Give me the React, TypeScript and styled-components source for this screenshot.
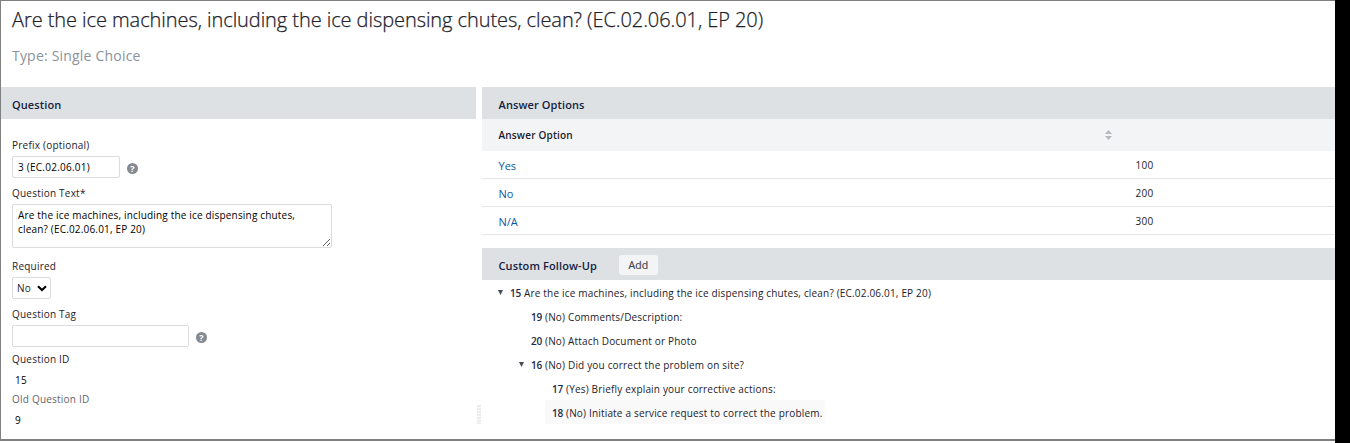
import React from "react";
import styled, { createGlobalStyle } from "styled-components";

const GlobalStyle = createGlobalStyle`
  *, *::before, *::after { box-sizing: border-box; }
  body {
    margin: 0;
    background: #fff;
    color: #1d2129;
    font-family: "Open Sans", "Liberation Sans", sans-serif;
    font-size: 10px;
  }
  input, textarea, select, button { font: inherit; letter-spacing: inherit; color: inherit; margin: 0; }
`;

const Screen = styled.div`
  display: flex;
  height: 443px;
  overflow: hidden;
`;

const Page = styled.main`
  width: 1335px;
  height: 441px;
  border: solid #7f7f7f;
  border-width: 1px 0 2px 1px;
  letter-spacing: 0.18px;
`;

const Backdrop = styled.div`
  flex: 1;
  background: #000;
`;

const Header = styled.header`
  height: 86px;
  padding: 5px 11px 0;
`;

const Title = styled.h1`
  margin: 0;
  color: #1d2129;
  font-size: 20px;
  font-weight: 300;
  -webkit-text-stroke: 0.25px #1d2129;
  line-height: 27px;
  letter-spacing: -0.07px;
  white-space: nowrap;
`;

const Subtitle = styled.p`
  margin: 13px 0 0;
  font-size: 14px;
  line-height: 20px;
  letter-spacing: 0.2px;
  color: #8c929b;
`;

const Columns = styled.div`
  display: flex;
  height: 352px;
`;

const QuestionPanel = styled.section`
  width: 475px;
`;

const Splitter = styled.div`
  width: 6px;
  display: flex;
  align-items: flex-end;
  justify-content: center;
  padding-bottom: 15px;
`;

const Grip = styled.div`
  width: 4px;
  height: 19px;
  background: repeating-linear-gradient(#ececec 0 2px, #f8f8f8 2px 3px);
`;

const AnswerPanel = styled.section`
  flex: 1;
`;

const PanelHeader = styled.div<{ $inset: number }>`
  display: flex;
  align-items: center;
  height: 32px;
  padding: 3px ${(p) => p.$inset}px 0;
  background: #dde1e4;
  color: #16213f;
  font-size: 11px;
  font-weight: 600;
  letter-spacing: 0.11px;
`;

const Form = styled.div`
  padding: 20px 11px 0;
`;

const Label = styled.label<{ $top?: number; $muted?: boolean }>`
  display: block;
  height: 14px;
  margin-top: ${(p) => p.$top ?? 0}px;
  line-height: 13px;
  font-size: 10px;
  letter-spacing: 0.22px;
  color: ${(p) => (p.$muted ? "#61656d" : "#1d2129")};
`;

const FieldRow = styled.div`
  display: flex;
  align-items: center;
  gap: 7px;
  margin-top: 3px;
`;

const TextInput = styled.input<{ $width: number }>`
  width: ${(p) => p.$width}px;
  height: 22px;
  padding: 0 5px;
  border: 1px solid #d9dddf;
  border-radius: 2px;
  background: #fff;
  color: #000;
  letter-spacing: 0.25px;
`;

const TextArea = styled.textarea`
  display: block;
  width: 320px;
  height: 44px;
  margin-top: 3px;
  padding: 3px 5px 4px;
  border: 1px solid #d9dddf;
  border-radius: 2px;
  line-height: 14px;
  color: #000;
  overflow: hidden;
  resize: both;
`;

const SelectBox = styled.button`
  display: flex;
  align-items: center;
  gap: 6px;
  width: 39px;
  height: 22px;
  margin-top: 3px;
  padding: 0 0 0 4px;
  border: 1px solid #d9dddf;
  border-radius: 2px;
  background: #fff;
`;

const Value = styled.div`
  height: 14px;
  margin-top: 7px;
  padding-left: 3px;
  line-height: 13px;
  color: #000;
`;

const HelpBadge = styled.span`
  display: flex;
  align-items: center;
  justify-content: center;
  width: 11px;
  height: 11px;
  margin-top: 2px;
  border-radius: 50%;
  background: #858990;
  color: #fff;
  font-size: 9px;
  font-weight: 700;
  line-height: 11px;
  letter-spacing: 0;
`;

const TableRow = styled.div<{ $head?: boolean }>`
  display: flex;
  align-items: center;
  height: ${(p) => (p.$head ? 32 : 28)}px;
  padding: ${(p) => (p.$head ? 0 : 1)}px 0 0 16.5px;
  background: ${(p) => (p.$head ? "#f3f4f6" : "#fff")};
  border-bottom: ${(p) => (p.$head ? "0" : "1px solid #e5e6e7")};
  font-weight: ${(p) => (p.$head ? 600 : 400)};
`;

const OptionCell = styled.div`
  width: 606px;
`;

const OptionLink = styled.a`
  color: #0b57a4;
  font-size: 11px;
  letter-spacing: 0;
`;

const ScoreCell = styled.div`
  padding-left: 31px;
  letter-spacing: 0.3px;
`;

const AddButton = styled.button`
  width: 39px;
  height: 20px;
  margin: -2px 0 0 22px;
  padding: 0;
  border: 0;
  border-radius: 3px;
  background: #f3f4f6;
  color: #43474f;
  font-size: 10.5px;
  font-weight: 400;
  -webkit-text-stroke: 0.2px #43474f;
`;

const FollowUp = styled.div`
  margin-top: 13px;
`;

const Tree = styled.div``;

const TreeItem = styled.div<{ $depth: number; $active?: boolean }>`
  display: flex;
  align-items: center;
  width: max-content;
  height: 24px;
  margin-left: ${(p) => p.$depth * 21}px;
  padding: 1px 3px 0 7px;
  white-space: pre;
  background: ${(p) => (p.$active ? "#f9f9f9" : "transparent")};
`;

const Toggle = styled.span`
  display: flex;
  width: 21px;
  padding-left: 9px;
`;

const Num = styled.span`
  width: 14px;
  color: #1c2b4b;
  font-weight: 600;
  letter-spacing: -0.1px;
`;

const Arrow = () => (
  <svg width="5" height="5" viewBox="0 0 5 5"><path d="M0 0H5L2.5 5Z" fill="#474b52" /></svg>
);

const Chevron = () => (
  <svg width="10" height="7" viewBox="0 0 10 7"><path d="M1 1.2L5 5L9 1.2" fill="none" stroke="#000" strokeWidth="2.1" /></svg>
);

const SortIcon = () => (
  <svg width="7" height="10" viewBox="0 0 7 10">
    <path d="M0 4L3.5 0L7 4ZM0 6H7L3.5 10Z" fill="#b5b9bd" />
  </svg>
);

const options = [["Yes", 100], ["No", 200], ["N/A", 300]];

const followUps = [
  { id: 15, indent: 0, open: true, text: "Are the ice machines, including the ice dispensing chutes, clean? (EC.02.06.01, EP 20)" },
  { id: 19, indent: 2, text: "(No) Comments/Description:" },
  { id: 20, indent: 2, text: "(No) Attach Document or Photo" },
  { id: 16, indent: 1, open: true, text: "(No) Did you correct the problem on site?" },
  { id: 17, indent: 3, text: "(Yes) Briefly explain your corrective actions:" },
  { id: 18, indent: 3, active: true, text: "(No) Initiate a service request to correct the problem." },
];

export default function App() {
  return (
    <Screen>
      <GlobalStyle />
      <Page>
        <Header>
          <Title>Are the ice machines, including the ice dispensing chutes, clean? (EC.02.06.01, EP 20)</Title>
          <Subtitle>Type: Single Choice</Subtitle>
        </Header>
        <Columns>
          <QuestionPanel>
            <PanelHeader $inset={11}>Question</PanelHeader>
            <Form>
              <Label>Prefix (optional)</Label>
              <FieldRow>
                <TextInput $width={108} defaultValue="3 (EC.02.06.01)" />
                <HelpBadge>?</HelpBadge>
              </FieldRow>
              <Label $top={9}>Question Text*</Label>
              <TextArea defaultValue="Are the ice machines, including the ice dispensing chutes, clean? (EC.02.06.01, EP 20)" />
              <Label $top={12}>Required</Label>
              <SelectBox>No<Chevron /></SelectBox>
              <Label $top={9}>Question Tag</Label>
              <FieldRow>
                <TextInput $width={177} />
                <HelpBadge>?</HelpBadge>
              </FieldRow>
              <Label $top={6}>Question ID</Label>
              <Value>15</Value>
              <Label $top={5} $muted>Old Question ID</Label>
              <Value>9</Value>
            </Form>
          </QuestionPanel>
          <Splitter><Grip /></Splitter>
          <AnswerPanel>
            <PanelHeader $inset={16.5}>Answer Options</PanelHeader>
            <TableRow $head>
              <OptionCell>Answer Option</OptionCell>
              <SortIcon />
            </TableRow>
            {options.map(([name, score]) => (
              <TableRow key={name}>
                <OptionCell><OptionLink>{name}</OptionLink></OptionCell>
                <ScoreCell>{score}</ScoreCell>
              </TableRow>
            ))}
            <FollowUp>
              <PanelHeader $inset={16.5}>
                Custom Follow-Up
                <AddButton>Add</AddButton>
              </PanelHeader>
              <Tree>
                {followUps.map((f) => (
                  <TreeItem key={f.id} $depth={f.indent} $active={f.active}>
                    {f.open && <Toggle><Arrow /></Toggle>}
                    <Num>{f.id}</Num>{f.text}
                  </TreeItem>
                ))}
              </Tree>
            </FollowUp>
          </AnswerPanel>
        </Columns>
      </Page>
      <Backdrop />
    </Screen>
  );
}
